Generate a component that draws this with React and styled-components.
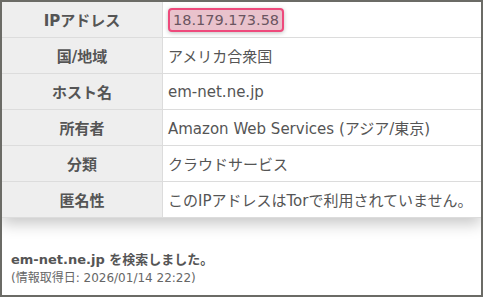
import React from "react";
import styled, { createGlobalStyle } from "styled-components";

const GlobalStyle = createGlobalStyle`
  html, body {
    margin: 0;
    padding: 0;
    background: #fff;
  }
  body {
    font-family: "DejaVu Sans", "Noto Sans CJK JP", sans-serif;
    color: #555;
  }
`;

const Frame = styled.div`
  box-sizing: border-box;
  width: 483px;
  height: 297px;
  border: 2px solid #6b6b66;
  background: #fff;
  overflow: hidden;
`;

const Table = styled.div`
  display: grid;
  grid-template-columns: 161px 1fr;
  background: #fff;
  box-shadow: 0 6px 14px rgba(0, 0, 0, 0.22);
`;

const Label = styled.div`
  height: 35px;
  display: flex;
  align-items: center;
  justify-content: center;
  background: #eeeeee;
  border-bottom: 1px solid #dcdcdc;
  border-right: 1px solid #dcdcdc;
  font-size: 15px;
  font-weight: bold;
  color: #555;
`;

const Value = styled.div`
  height: 35px;
  display: flex;
  align-items: center;
  padding-left: 5px;
  border-bottom: 1px solid #dcdcdc;
  font-size: 15px;
  color: #555;
  white-space: nowrap;
`;

const Highlight = styled.span`
  display: inline-block;
  padding: 0 3px;
  font-size: 14.5px;
  line-height: 20px;
  border: 2px solid #ee4a7c;
  border-radius: 4px;
  background: #e9c2cc;
  color: #6a5560;
  box-shadow: 0 1px 4px rgba(0, 0, 0, 0.25);
`;

const Footer = styled.div`
  padding: 32px 0 0 9px;
`;

const Searched = styled.div`
  font-size: 13px;
  font-weight: bold;
  color: #555;
  line-height: 19px;
`;

const Fetched = styled.div`
  font-size: 12px;
  color: #666;
  line-height: 19px;
`;

const rows = [
  ["IPアドレス", "18.179.173.58", true],
  ["国/地域", "アメリカ合衆国"],
  ["ホスト名", "em-net.ne.jp"],
  ["所有者", "Amazon Web Services (アジア/東京)"],
  ["分類", "クラウドサービス"],
  ["匿名性", "このIPアドレスはTorで利用されていません。"],
];

export default function App() {
  return (
    <>
      <GlobalStyle />
      <Frame>
        <Table>
          {rows.map(([label, value, mark]) => (
            <React.Fragment key={label}>
              <Label>{label}</Label>
              <Value>{mark ? <Highlight>{value}</Highlight> : value}</Value>
            </React.Fragment>
          ))}
        </Table>
        <Footer>
          <Searched>em-net.ne.jp を検索しました。</Searched>
          <Fetched>(情報取得日: 2026/01/14 22:22)</Fetched>
        </Footer>
      </Frame>
    </>
  );
}
